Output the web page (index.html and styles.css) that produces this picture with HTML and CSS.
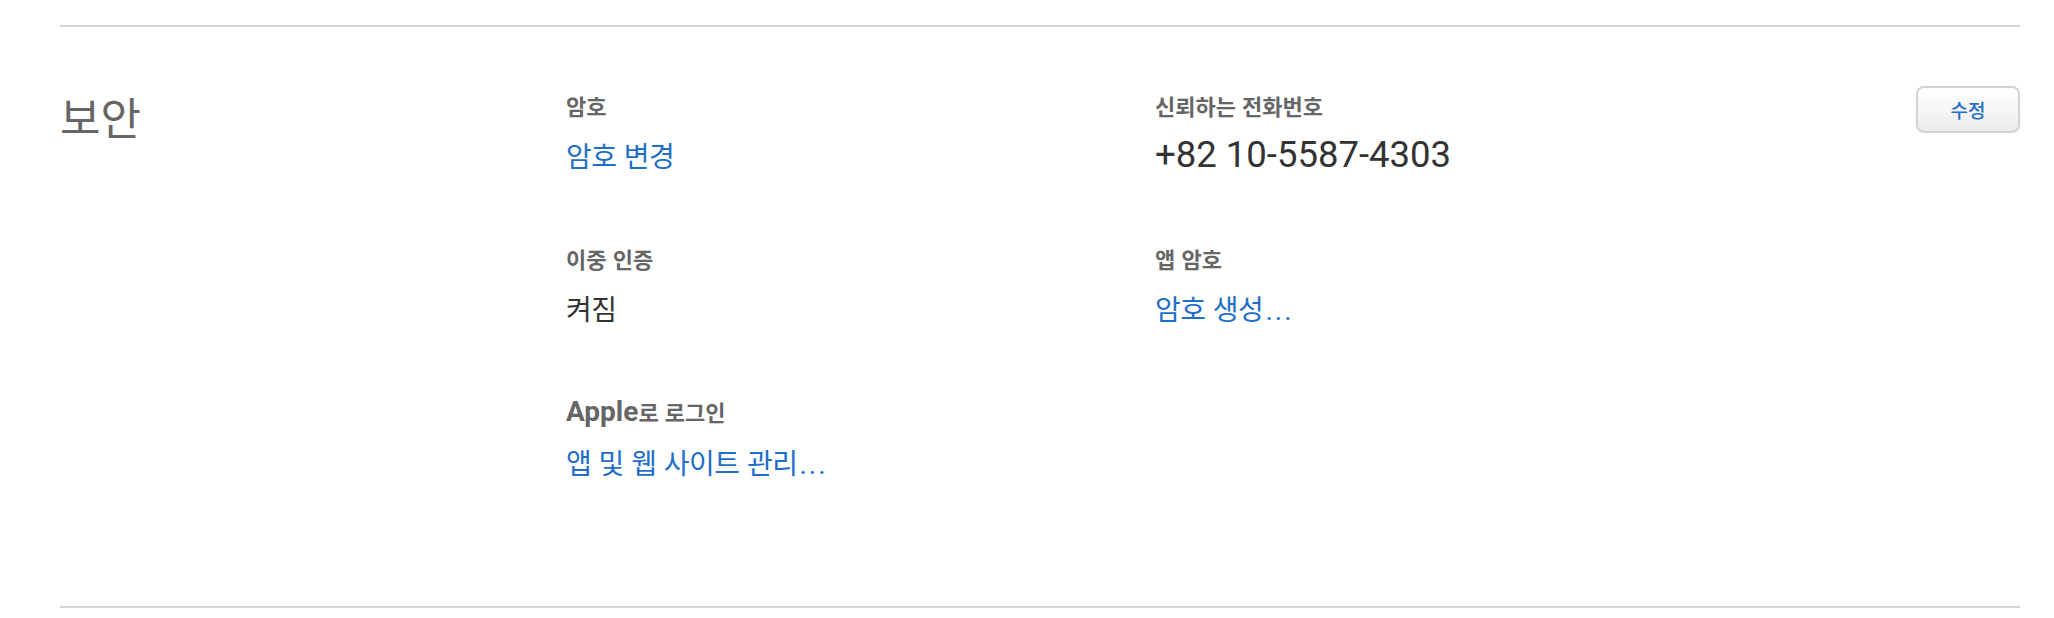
FILE: index.html
```html
<!DOCTYPE html>
<html lang="ko">
<head>
<meta charset="utf-8">
<title>보안</title>
<link rel="stylesheet" href="styles.css">
</head>
<body>
<div class="page">
  <section class="security">
    <h2 class="title">보안</h2>
    <div class="col">
      <div class="field">
        <div class="label">암호</div>
        <a class="value link" href="#">암호 변경</a>
      </div>
      <div class="field">
        <div class="label">이중 인증</div>
        <div class="value">켜짐</div>
      </div>
      <div class="field">
        <div class="label"><span class="latin">Apple</span>로 로그인</div>
        <a class="value link" href="#">앱 및 웹 사이트 관리<span class="dots">...</span></a>
      </div>
    </div>
    <div class="col">
      <div class="field">
        <div class="label">신뢰하는 전화번호</div>
        <div class="value phone">+82 10-5587-4303</div>
      </div>
      <div class="field">
        <div class="label">앱 암호</div>
        <a class="value link" href="#">암호 생성<span class="dots">...</span></a>
      </div>
    </div>
    <div class="actions">
      <button class="btn" type="button">수정</button>
    </div>
  </section>
</div>
</body>
</html>
```

FILE: styles.css
```css
html, body {
  margin: 0;
  padding: 0;
  background: #ffffff;
}

body {
  font-family: "Noto Sans CJK KR", "Noto Sans", sans-serif;
  color: #333333;
}

.page {
  padding: 25px 34px 0 60px;
}

.security {
  display: grid;
  grid-template-columns: 506px 589px 1fr 104px;
  align-items: start;
  border-top: 2px solid #d6d6d6;
  border-bottom: 2px solid #d6d6d6;
  padding: 59px 0 125px 0;
}

.title {
  margin: 0;
  font-size: 44px;
  line-height: 60px;
  font-weight: 400;
  color: #666666;
}

.col {
  display: flex;
  flex-direction: column;
  gap: 75px;
  padding-top: 7px;
}

.field {
  display: flex;
  flex-direction: column;
  align-items: flex-start;
  gap: 22px;
}

.label {
  font-size: 22px;
  line-height: 24px;
  font-weight: 700;
  color: #666666;
}

.latin {
  font-family: Roboto, "Liberation Sans", sans-serif;
  font-size: 28px;
  font-weight: 700;
}

.value {
  font-size: 28px;
  line-height: 32px;
  letter-spacing: -0.5px;
  color: #333333;
  text-decoration: none;
}

.link {
  color: #1f6ec8;
}

.dots {
  font-family: Roboto, "Liberation Sans", sans-serif;
  letter-spacing: 2px;
  margin-left: 2px;
}

.phone {
  font-family: Roboto, "Liberation Sans", sans-serif;
  font-size: 36.5px;
  letter-spacing: 0;
  color: #333333;
}

.actions {
  display: flex;
  justify-content: flex-end;
}

.btn {
  width: 104px;
  height: 47px;
  border: 2px solid #d3d3d3;
  border-radius: 8px;
  background: linear-gradient(to bottom, #ffffff, #ececec);
  font-family: "Noto Sans CJK KR", sans-serif;
  font-size: 19px;
  font-weight: 500;
  color: #1f6ec8;
  padding: 0;
  cursor: pointer;
}
```
